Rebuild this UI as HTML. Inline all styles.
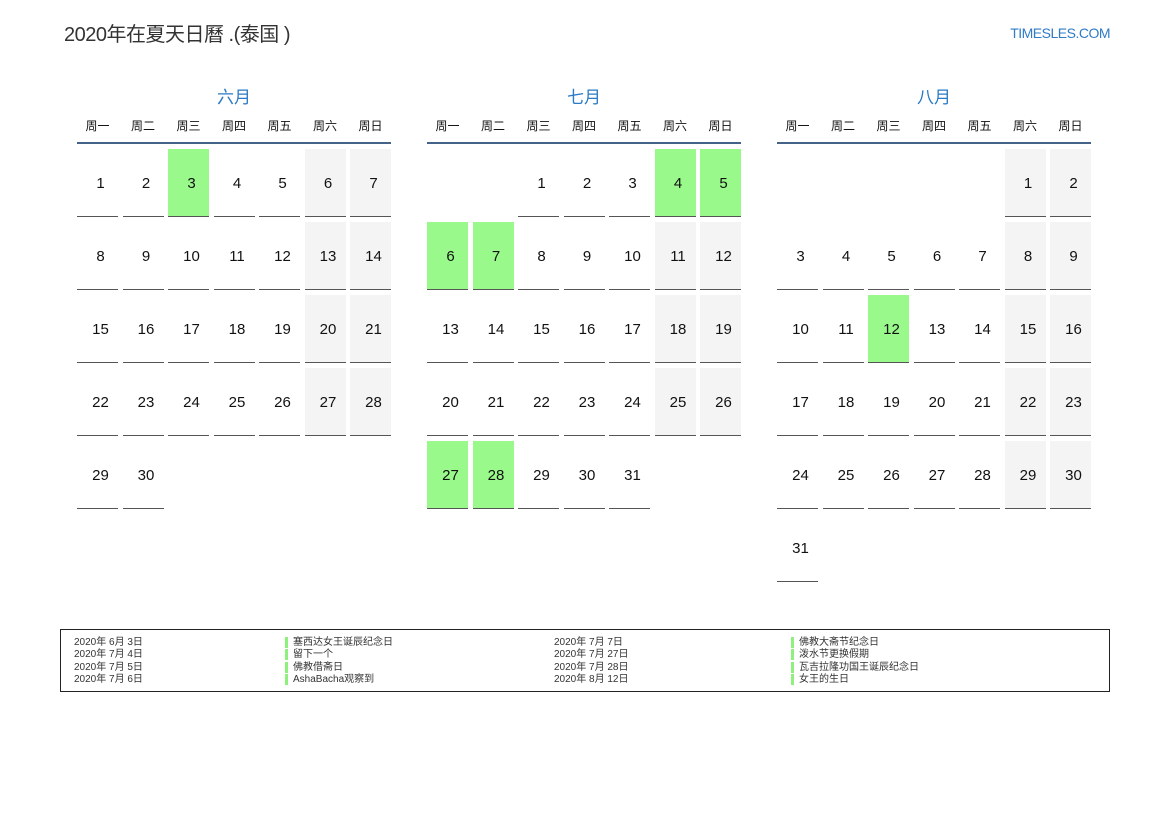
<!DOCTYPE html>
<html><head><meta charset="utf-8"><style>
body{margin:0;width:1169px;height:827px;background:#fff;position:relative;font-family:"Liberation Sans","Noto Sans CJK SC",sans-serif;color:#111;overflow:hidden}
.title{position:absolute;left:64px;top:18px;font-size:20px;color:#333;letter-spacing:-0.5px}
.site{position:absolute;right:59px;top:25px;font-size:14px;color:#2f7bc4;letter-spacing:-0.5px}
.m{position:absolute;top:86px;width:314px}
.mt{text-align:center;font-size:17px;color:#2a7ac6;height:24px;line-height:24px}
.wd{display:grid;grid-template-columns:repeat(7,41px);column-gap:4.5px;margin-top:6px;height:26px;border-bottom:2px solid #456289;font-size:12px;text-align:center;line-height:20px}
.g{display:grid;grid-template-columns:repeat(7,41px);grid-auto-rows:68px;column-gap:4.5px;row-gap:5px;margin-top:5px}
.g div{box-sizing:border-box;border-bottom:1px solid #555;display:flex;align-items:center;justify-content:center;font-size:15px;padding-left:6px;padding-top:2px}
.g div.e{border:none}
.g div.w{background:#f4f4f4}
.g div.h{background:#99f98a}
.lg{position:absolute;left:60px;top:629px;width:1048px;height:61px;border:1px solid #222;font-size:10px;color:#333}
.r{position:absolute;height:12px;line-height:12px;white-space:nowrap}
.b{position:absolute;width:3px;height:11px;background:#8ef07d}
</style></head><body>
<div class="title">2020年在夏天日曆 .(泰国 )</div>
<div class="site">TIMESLES.COM</div>

<div class="m" style="left:77px"><div class="mt">六月</div>
<div class="wd"><span>周一</span><span>周二</span><span>周三</span><span>周四</span><span>周五</span><span>周六</span><span>周日</span></div>
<div class="g">
<div>1</div><div>2</div><div class="h">3</div><div>4</div><div>5</div><div class="w">6</div><div class="w">7</div>
<div>8</div><div>9</div><div>10</div><div>11</div><div>12</div><div class="w">13</div><div class="w">14</div>
<div>15</div><div>16</div><div>17</div><div>18</div><div>19</div><div class="w">20</div><div class="w">21</div>
<div>22</div><div>23</div><div>24</div><div>25</div><div>26</div><div class="w">27</div><div class="w">28</div>
<div>29</div><div>30</div>
</div></div>

<div class="m" style="left:427px"><div class="mt">七月</div>
<div class="wd"><span>周一</span><span>周二</span><span>周三</span><span>周四</span><span>周五</span><span>周六</span><span>周日</span></div>
<div class="g">
<div class="e"></div><div class="e"></div><div>1</div><div>2</div><div>3</div><div class="h">4</div><div class="h">5</div>
<div class="h">6</div><div class="h">7</div><div>8</div><div>9</div><div>10</div><div class="w">11</div><div class="w">12</div>
<div>13</div><div>14</div><div>15</div><div>16</div><div>17</div><div class="w">18</div><div class="w">19</div>
<div>20</div><div>21</div><div>22</div><div>23</div><div>24</div><div class="w">25</div><div class="w">26</div>
<div class="h">27</div><div class="h">28</div><div>29</div><div>30</div><div>31</div>
</div></div>

<div class="m" style="left:777px"><div class="mt">八月</div>
<div class="wd"><span>周一</span><span>周二</span><span>周三</span><span>周四</span><span>周五</span><span>周六</span><span>周日</span></div>
<div class="g">
<div class="e"></div><div class="e"></div><div class="e"></div><div class="e"></div><div class="e"></div><div class="w">1</div><div class="w">2</div>
<div>3</div><div>4</div><div>5</div><div>6</div><div>7</div><div class="w">8</div><div class="w">9</div>
<div>10</div><div>11</div><div class="h">12</div><div>13</div><div>14</div><div class="w">15</div><div class="w">16</div>
<div>17</div><div>18</div><div>19</div><div>20</div><div>21</div><div class="w">22</div><div class="w">23</div>
<div>24</div><div>25</div><div>26</div><div>27</div><div>28</div><div class="w">29</div><div class="w">30</div>
<div>31</div>
</div></div>

<div class="lg">
<div class="r" style="left:13px;top:7px">2020年 6月 3日</div>
<div class="r" style="left:13px;top:19px">2020年 7月 4日</div>
<div class="r" style="left:13px;top:32px">2020年 7月 5日</div>
<div class="r" style="left:13px;top:44px">2020年 7月 6日</div>
<div class="b" style="left:224px;top:7px"></div><div class="b" style="left:224px;top:19px"></div><div class="b" style="left:224px;top:32px"></div><div class="b" style="left:224px;top:44px"></div>
<div class="r" style="left:232px;top:7px">塞西达女王诞辰纪念日</div>
<div class="r" style="left:232px;top:19px">留下一个</div>
<div class="r" style="left:232px;top:32px">佛教借斋日</div>
<div class="r" style="left:232px;top:44px">AshaBacha观察到</div>
<div class="r" style="left:493px;top:7px">2020年 7月 7日</div>
<div class="r" style="left:493px;top:19px">2020年 7月 27日</div>
<div class="r" style="left:493px;top:32px">2020年 7月 28日</div>
<div class="r" style="left:493px;top:44px">2020年 8月 12日</div>
<div class="b" style="left:730px;top:7px"></div><div class="b" style="left:730px;top:19px"></div><div class="b" style="left:730px;top:32px"></div><div class="b" style="left:730px;top:44px"></div>
<div class="r" style="left:738px;top:7px">佛教大斋节纪念日</div>
<div class="r" style="left:738px;top:19px">泼水节更换假期</div>
<div class="r" style="left:738px;top:32px">瓦吉拉隆功国王诞辰纪念日</div>
<div class="r" style="left:738px;top:44px">女王的生日</div>
</div>
</body></html>
